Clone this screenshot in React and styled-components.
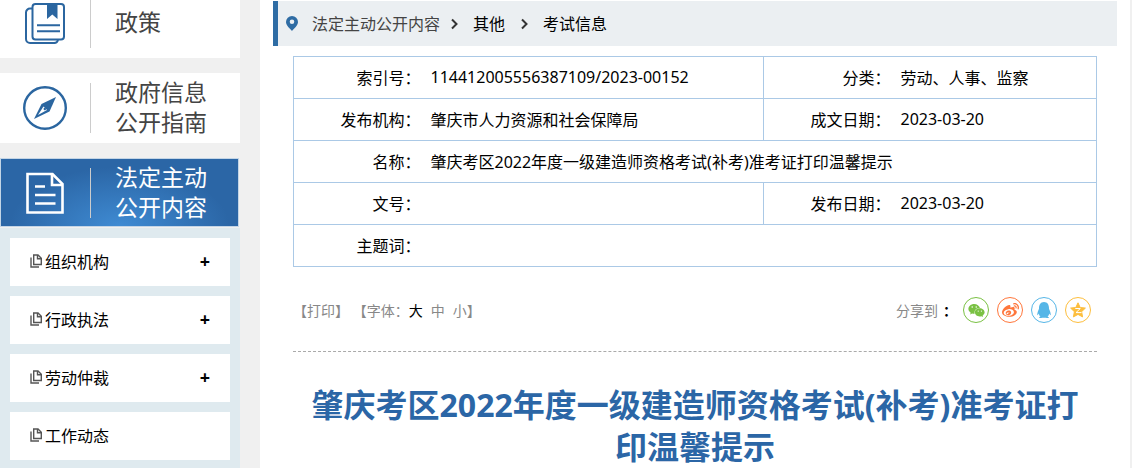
import React from "react";
import styled, { createGlobalStyle } from "styled-components";
import { FaWeixin, FaWeibo, FaQq } from "react-icons/fa";

const GlobalStyle = createGlobalStyle`
  * {
    box-sizing: border-box;
  }
  body {
    margin: 0;
    overflow: hidden;
    background: #f0f0f0;
    color: #000;
    font-family: "Noto Sans", "Noto Sans CJK SC", sans-serif;
    font-size: 16px;
  }
  a {
    color: inherit;
    text-decoration: none;
  }
`;

const Page = styled.div`
  display: flex;
  gap: 20px;
  min-height: 100vh;
  padding-right: 2px;
`;

const Sidebar = styled.nav`
  display: flex;
  flex-direction: column;
  flex: 0 0 240px;
  margin-top: -12px;
`;

const MenuItem = styled.a`
  display: flex;
  align-items: center;
  height: 70px;
  margin-bottom: 15px;
  background: #fff;
  color: #444;
  font-size: 23px;
  line-height: 30px;
`;

const ActiveItem = styled(MenuItem)`
  height: 69px;
  margin: 0 1px 1px 0;
  box-shadow: inset 0 0 0 1px #c3d5e6;
  background: radial-gradient(ellipse 110px 60px at 50% 100%, #3f8bd3, #2b66a6);
  color: #fff;
`;

const MenuIcon = styled.span`
  display: flex;
  justify-content: center;
  width: 90px;
  svg {
    display: block;
  }
`;

const MenuText = styled.span`
  display: flex;
  align-items: center;
  height: 50px;
  padding-left: 24px;
  border-left: 1px solid #ccc;
`;

const MenuLabel = styled.span`
  width: 94px;
  padding-bottom: 2px;
`;

const SubMenu = styled.div`
  display: flex;
  flex-direction: column;
  flex: 1;
  gap: 10px;
  padding: 10px;
  background: #dfeaef;
`;

const SubRow = styled.div`
  display: flex;
  align-items: center;
  justify-content: space-between;
  height: 48px;
  padding: 0 17px 2px 20px;
  background: #fff;
`;

const SubLink = styled.a`
  display: flex;
  align-items: center;
  gap: 3px;
`;

const Expand = styled.button`
  width: 16px;
  padding: 0;
  border: 0;
  background: none;
  color: #000;
  font: bold 18px "Noto Sans", sans-serif;
  cursor: pointer;
`;

const Main = styled.main`
  flex: 1;
  min-width: 0;
  padding: 1px 13px 0;
  background: #fff;
`;

const Crumbs = styled.nav`
  display: flex;
  align-items: center;
  height: 45px;
  padding-left: 8px;
  border-left: 5px solid #2e6ca4;
  background: #ebeff2;
  svg {
    flex: none;
  }
`;

const Crumb = styled.a`
  color: ${props => (props.$muted ? "#444" : "#000")};
  margin-left: 14px;
  margin-right: ${props => (props.$muted ? "10px" : "15px")};
  padding-bottom: 2px;
`;

const Body = styled.div`
  padding: 10px 20px 0;
`;

const InfoTable = styled.table`
  width: 100%;
  table-layout: fixed;
  border-collapse: collapse;
  border: 1px solid #abc9e6;
`;

const InfoRow = styled.tr`
  height: 42px;
  border-bottom: 1px solid #abc9e6;
`;

const Label = styled.th`
  padding: 0 6px 2px 0;
  font-weight: normal;
  text-align: right;
  border-left: 1px solid #abc9e6;
`;

const Value = styled.td`
  padding: 0 0 2px 4px;
`;

const Tools = styled.div`
  display: flex;
  align-items: center;
  justify-content: space-between;
  height: 85px;
  padding-top: 2px;
  border-bottom: 1px dashed #aaa;
  color: #888;
  font-size: 14px;
`;

const ToolGroup = styled.div`
  display: flex;
  align-items: center;
`;

const TextButton = styled.button`
  padding: 0;
  border: 0;
  background: none;
  color: ${props => (props.$on ? "#000" : "inherit")};
  font: inherit;
  cursor: pointer;
`;

const Sizes = styled.span`
  display: flex;
  gap: 8px;
`;

const Share = styled(ToolGroup)`
  gap: 8px;
  padding-right: 6px;
`;

const ShareLabel = styled.span`
  display: flex;
  align-items: center;
  width: 59px;
  white-space: nowrap;
`;

const Colon = styled.b`
  color: #000;
  font-size: 14px;
  margin-left: 5px;
`;

const ShareLink = styled.a`
  display: flex;
  align-items: center;
  justify-content: center;
  width: 26px;
  height: 26px;
  border: 1px solid ${props => props.$color};
  border-radius: 50%;
  color: ${props => props.$color};
`;

const Title = styled.h1`
  margin: 0;
  padding: 32px 12px 0;
  color: #2b66a6;
  font-size: 32px;
  line-height: 42px;
  text-align: center;
`;

const PolicyIcon = () => (
  <svg width="42" height="42" viewBox="0 0 42 42" fill="none" stroke="#2b66a0" strokeWidth="2">
    <path d="M8 6.500H6a4 4 0 0 0-4 4V37a4 4 0 0 0 4 4h24a4 4 0 0 0 4-3" />
    <rect x="8.500" y="2" width="31.500" height="35.500" rx="3" />
    <path d="M13 23.200h23M13 29.300h23" />
    <path d="M23 2h10.500v15l-5.200-4.500L23 17z" fill="#2b66a0" stroke="none" />
  </svg>
);

const CompassIcon = () => (
  <svg width="44" height="44" viewBox="0 0 44 44">
    <circle cx="22" cy="22" r="20.800" fill="none" stroke="#2b66a0" strokeWidth="2.400" />
    <path d="M33 11L26.500 25.500 11 33 18.500 18z" fill="#2b66a0" />
    <path d="M20.500 20.500L24 24 15 29z" fill="#fff" />
    <circle cx="21.800" cy="23" r="1.200" fill="#2b66a0" />
  </svg>
);

const DocIcon = () => (
  <svg width="38" height="42" viewBox="0 0 38 42" fill="none" stroke="#fff" strokeWidth="2.600">
    <path d="M1.500 2h25l10 10v28.500h-35z" />
    <path d="M26 2v11h10" />
    <path d="M9 14.500h10M9 23h20.500M9 31.500h20.500" />
  </svg>
);

const CopyIcon = () => (
  <svg width="12" height="14" viewBox="0 0 12 14" fill="none" stroke="#555" strokeWidth="1.400">
    <path d="M3.700 1h4.300l3.300 3.300v6.200H3.700z" />
    <path d="M7.500 1v3.700h3.800M1 3.500v9.500h8" />
  </svg>
);

const PinIcon = () => (
  <svg width="12" height="15" viewBox="0 0 12 15">
    <path
      d="M6 0a6 6 0 0 1 6 6c0 3.500-4 6.500-6 9C4 12.500 0 9.500 0 6a6 6 0 0 1 6-6zm0 3.400a2.300 2.300 0 1 0 0 4.600 2.300 2.300 0 0 0 0-4.600z"
      fill="#2e6ca4"
    />
  </svg>
);

const Arrow = () => (
  <svg width="9" height="12" viewBox="0 0 9 12" fill="none" stroke="#333" strokeWidth="2">
    <path d="M2 1.500L6.500 6 2 10.500" />
  </svg>
);

const QzoneIcon = () => (
  <svg width="16" height="16" viewBox="0 0 16 16">
    <path
      d="M8 .8l2.200 4.700 5.200.6-3.800 3.600 1 5.200L8 12.400l-4.600 2.500 1-5.200L.6 6.100l5.200-.6z"
      fill="currentColor"
      stroke="currentColor"
      strokeLinejoin="round"
    />
    <path d="M5.300 6.500h5L6 10.600h5.500" fill="none" stroke="#fff" />
  </svg>
);

const subItems = [
  { name: "组织机构", expandable: true },
  { name: "行政执法", expandable: true },
  { name: "劳动仲裁", expandable: true },
  { name: "工作动态", expandable: false }
];

const shares = [
  { name: "微信", color: "#7ac143", icon: <FaWeixin size={17} /> },
  { name: "微博", color: "#ff763b", icon: <FaWeibo size={17} /> },
  { name: "QQ", color: "#56b6e7", icon: <FaQq size={16} /> },
  { name: "QQ空间", color: "#fdbe3d", icon: <QzoneIcon /> }
];

const App = () => (
  <>
    <GlobalStyle />
    <Page>
      <Sidebar>
        <MenuItem href="#">
          <MenuIcon>
            <PolicyIcon />
          </MenuIcon>
          <MenuText>
            <MenuLabel>政策</MenuLabel>
          </MenuText>
        </MenuItem>
        <MenuItem href="#">
          <MenuIcon>
            <CompassIcon />
          </MenuIcon>
          <MenuText>
            <MenuLabel>政府信息公开指南</MenuLabel>
          </MenuText>
        </MenuItem>
        <ActiveItem href="#">
          <MenuIcon>
            <DocIcon />
          </MenuIcon>
          <MenuText>
            <MenuLabel>法定主动公开内容</MenuLabel>
          </MenuText>
        </ActiveItem>
        <SubMenu>
          {subItems.map(item => (
            <SubRow key={item.name}>
              <SubLink href="#">
                <CopyIcon />
                {item.name}
              </SubLink>
              {item.expandable && <Expand type="button">+</Expand>}
            </SubRow>
          ))}
        </SubMenu>
      </Sidebar>
      <Main>
        <Crumbs>
          <PinIcon />
          <Crumb href="#" $muted>
            法定主动公开内容
          </Crumb>
          <Arrow />
          <Crumb href="#">其他</Crumb>
          <Arrow />
          <Crumb href="#">考试信息</Crumb>
        </Crumbs>
        <Body>
          <InfoTable>
            <colgroup>
              <col width="133" />
              <col />
              <col width="133" />
              <col width="200" />
            </colgroup>
            <tbody>
              <InfoRow>
                <Label scope="row">索引号：</Label>
                <Value>114412005556387109/2023-00152</Value>
                <Label scope="row">分类：</Label>
                <Value>劳动、人事、监察</Value>
              </InfoRow>
              <InfoRow>
                <Label scope="row">发布机构：</Label>
                <Value>肇庆市人力资源和社会保障局</Value>
                <Label scope="row">成文日期：</Label>
                <Value>2023-03-20</Value>
              </InfoRow>
              <InfoRow>
                <Label scope="row">名称：</Label>
                <Value colSpan={3}>肇庆考区2022年度一级建造师资格考试(补考)准考证打印温馨提示</Value>
              </InfoRow>
              <InfoRow>
                <Label scope="row">文号：</Label>
                <Value />
                <Label scope="row">发布日期：</Label>
                <Value>2023-03-20</Value>
              </InfoRow>
              <InfoRow>
                <Label scope="row">主题词：</Label>
                <Value colSpan={3} />
              </InfoRow>
            </tbody>
          </InfoTable>
          <Tools>
            <ToolGroup>
              <TextButton type="button">【打印】</TextButton>
              <span>&nbsp;【字体：</span>
              <Sizes>
                <TextButton type="button" $on>
                  大
                </TextButton>
                <TextButton type="button">中</TextButton>
                <TextButton type="button">小</TextButton>
              </Sizes>
              <span>】</span>
            </ToolGroup>
            <Share>
              <ShareLabel>
                分享到<Colon>：</Colon>
              </ShareLabel>
              {shares.map(item => (
                <ShareLink key={item.name} href="#" aria-label={item.name} $color={item.color}>
                  {item.icon}
                </ShareLink>
              ))}
            </Share>
          </Tools>
          <Title>肇庆考区2022年度一级建造师资格考试(补考)准考证打印温馨提示</Title>
        </Body>
      </Main>
    </Page>
  </>
);

export default App;
